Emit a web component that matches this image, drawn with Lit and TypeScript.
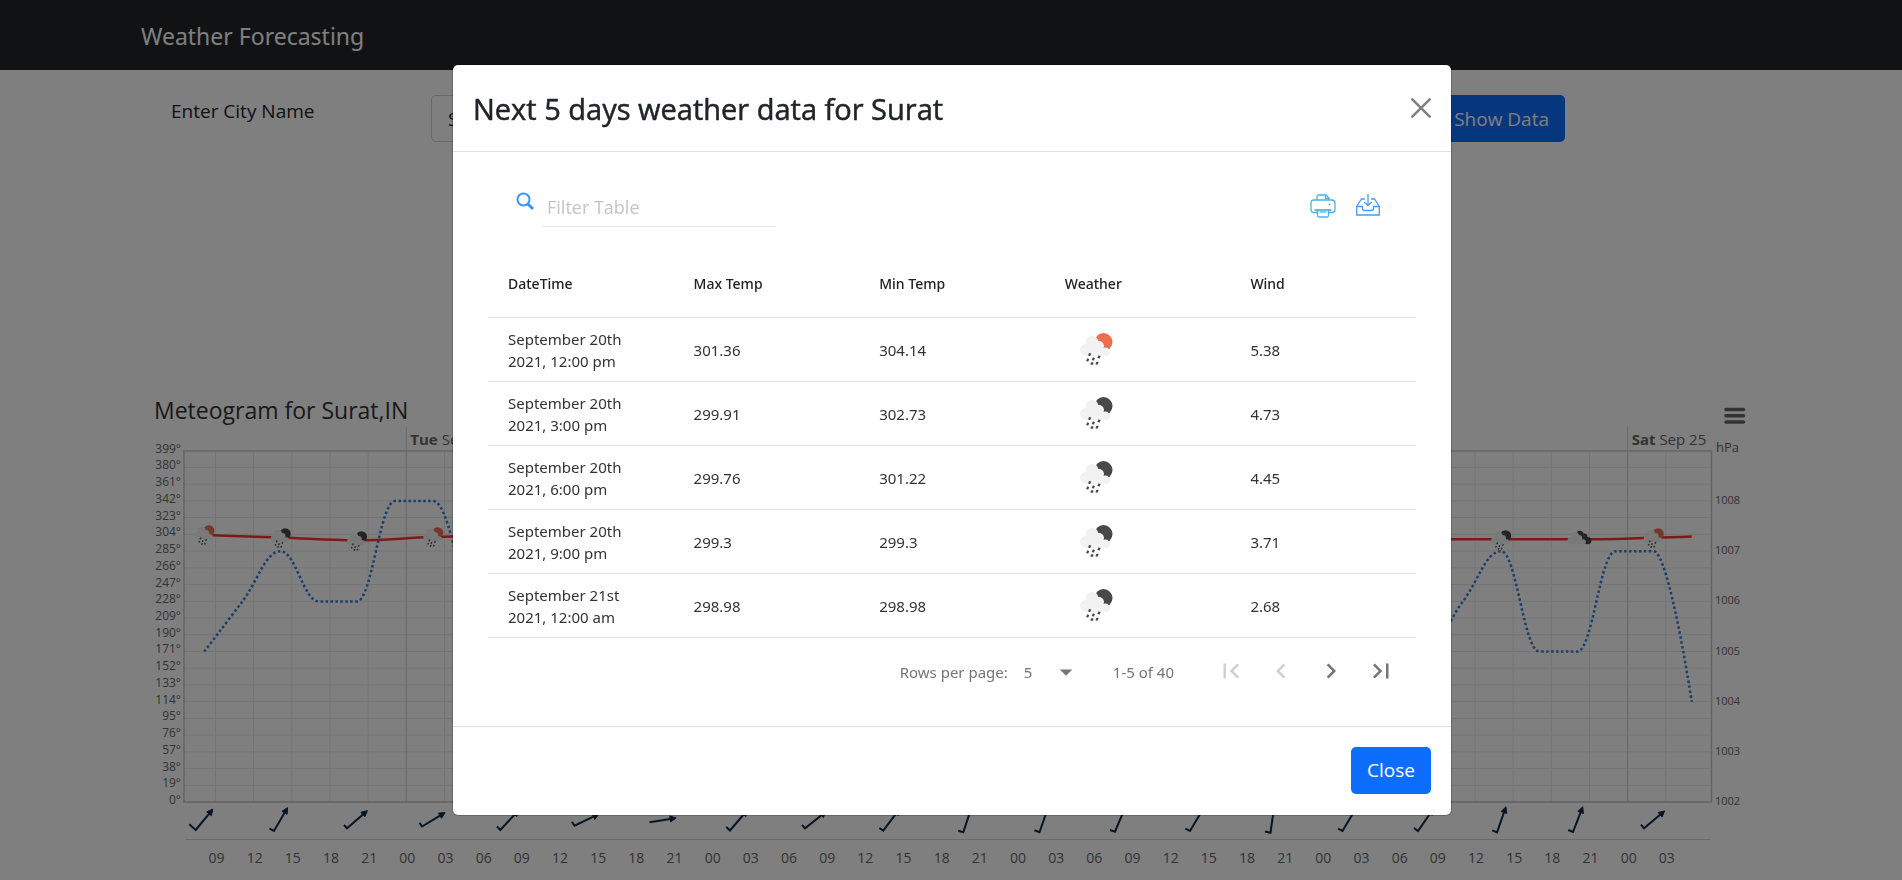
import { LitElement, html, svg, css } from "lit";
import { customElement, property } from "lit/decorators.js";

type Kind = "day-rain" | "night-rain" | "night-cloud";
type Point = [number, number];

/** Artwork for one weather symbol, drawn in a 62 x 62 box. */
const weatherArt = (kind: Kind) => {
  const disc = kind === "day-rain" ? "#ec6e4c" : "#48484a";
  const drops = [
    [24.7, 36.5],
    [22.7, 42],
    [28.3, 41],
    [34, 39],
    [27, 45.5],
    [32, 45.2],
  ];
  return svg`
    ${kind === "night-cloud"
      ? svg`<g fill=${disc}>
          <circle cx="35" cy="22" r="6"></circle><circle cx="42" cy="26" r="5.5"></circle>
          <circle cx="48" cy="32" r="6"></circle><circle cx="43" cy="31" r="6"></circle>
        </g>`
      : svg`<circle cx="38.5" cy="24" r="9" fill=${disc}></circle>`}
    <g fill="#f2f2f2">
      <circle cx="27" cy="24" r="6.3"></circle>
      <circle cx="21" cy="32" r="6"></circle>
      <circle cx="34" cy="28" r="5"></circle>
      <circle cx="40.5" cy="34" r="4.4"></circle>
      <rect x="19" y="25" width="18" height="13" rx="3"></rect>
      <rect x="21" y="30" width="20" height="8" rx="3"></rect>
    </g>
    ${kind === "night-cloud"
      ? ""
      : drops.map(
          ([x, y]) => svg`<line x1=${x + 0.6} y1=${y - 1.3} x2=${x - 0.6} y2=${y + 1.3}
            stroke="#48484a" stroke-width="2.2"></line>`
        )}
  `;
};

@customElement("weather-icon")
class WeatherIcon extends LitElement {
  @property() kind: Kind = "day-rain";
  static styles = css`
    :host { display: block; }
    svg { display: block; width: 62px; height: 62px; }
  `;
  render() {
    return html`<svg viewBox="0 0 62 62" aria-hidden="true">${weatherArt(this.kind)}</svg>`;
  }
}

const STEP = 38.14;
const pointX = (i: number) => 204.3 + i * STEP;
const pressureY = (p: number) => 802 - 50.15 * (p - 1002);

const PRESSURE = [
  1005, 1006, 1007, 1006, 1006, 1008, 1008, 1006, 1005, 1006, 1007, 1005, 1005, 1007,
  1007, 1005, 1005, 1006, 1007, 1005, 1005, 1007, 1007, 1005, 1005, 1006, 1007, 1005,
  1005, 1007, 1007, 1005, 1005, 1006, 1007, 1005, 1005, 1007, 1007, 1004,
];

const TEMPERATURE: Point[] = [
  [0, 535], [2, 537.5], [4, 540.3], [6, 537], [8, 535.8], [12, 539], [16, 539],
  [20, 536], [26, 539], [32, 539.3], [36, 539.3], [38, 537.8], [39, 536.5],
];

const SYMBOLS: [number, Kind, number][] = [
  [0, "day-rain", 535],
  [2, "night-rain", 538],
  [4, "night-rain", 541],
  [6, "day-rain", 537],
  [34, "night-rain", 540],
  [36, "night-cloud", 540],
  [38, "day-rain", 538],
];

/** Wind barbs: tail, a point the shaft passes through, end of the feather. */
const WIND: [Point, Point, Point?][] = [
  [[195.7, 830], [212.7, 809.3], [189.3, 824.3]],
  [[274, 831], [287, 808.6], [269.5, 828.7]],
  [[347, 828.3], [367, 811], [344, 825]],
  [[422, 826.5], [444.5, 813], [419.5, 822.7]],
  [[500.3, 830], [516, 813], [497, 826.3]],
  [[574.5, 825.7], [597, 815], [572, 821.7]],
  [[649.5, 822.3], [676, 818]],
  [[730, 830.5], [744, 814], [726.3, 827]],
  [[805, 828.3], [823, 814], [802, 825]],
  [[883.3, 830.7], [895, 815], [879.3, 828]],
  [[963.3, 832.3], [969, 815], [958.3, 830.7]],
  [[1039.5, 832.3], [1045.5, 815], [1034.5, 830.3]],
  [[1115, 831.7], [1122, 815], [1110, 830]],
  [[1190, 831], [1199.5, 815], [1185.3, 828.7]],
  [[1270.5, 832.7], [1273, 815], [1265, 831.5]],
  [[1342.5, 831], [1352, 815], [1338, 828.7]],
  [[1418, 831], [1429, 815], [1414, 828]],
  [[1497, 832.3], [1505.7, 807.5], [1492.3, 830.3]],
  [[1573, 832], [1582.5, 807.5], [1568.3, 830]],
  [[1644, 828.3], [1664, 811.5], [1641, 824.7]],
];

/** Smooth path through the points whose control points never overshoot them. */
function spline(pts: Point[]): string {
  let d = `M${pts[0][0]} ${pts[0][1]}`;
  let prevRight: Point = pts[0];
  for (let i = 1; i < pts.length; i++) {
    const [x, y] = pts[i];
    const last = pts[i - 1];
    const next = pts[i + 1];
    let left: Point = [x, y];
    let right: Point = [x, y];
    if (next) {
      left = [(1.5 * x + last[0]) / 2.5, (1.5 * y + last[1]) / 2.5];
      right = [(1.5 * x + next[0]) / 2.5, (1.5 * y + next[1]) / 2.5];
      const shift = ((right[1] - left[1]) * (right[0] - x)) / (right[0] - left[0]) + y - right[1];
      left[1] += shift;
      right[1] += shift;
      const hi = Math.max(last[1], y);
      const lo = Math.min(last[1], y);
      if (left[1] > hi) { left[1] = hi; right[1] = 2 * y - hi; }
      else if (left[1] < lo) { left[1] = lo; right[1] = 2 * y - lo; }
      const hi2 = Math.max(next[1], y);
      const lo2 = Math.min(next[1], y);
      if (right[1] > hi2) { right[1] = hi2; left[1] = 2 * y - hi2; }
      else if (right[1] < lo2) { right[1] = lo2; left[1] = 2 * y - lo2; }
    }
    d += `C${prevRight[0]} ${prevRight[1]} ${left[0]} ${left[1]} ${x} ${y}`;
    prevRight = right;
  }
  return d;
}

@customElement("meteogram-chart")
class MeteogramChart extends LitElement {
  static styles = css`
    :host { display: block; }
    .chart { display: block; width: 100%; height: auto; font-family: "Open Sans", "Noto Sans", sans-serif; }
    .title { font-size: 23px; fill: #333; }
    .tick { font-size: 12px; fill: #666; }
    .press { font-size: 11px; fill: #666; }
    .hour { font-size: 14px; fill: #666; }
    .day { font-size: 15px; fill: #666; }
    .unit { font-size: 13px; fill: #666; }
    .end { text-anchor: end; }
    .mid { text-anchor: middle; }
    .bold { font-weight: 700; }
  `;

  private barb([tail, through, feather]: [Point, Point, Point?]) {
    const dx = through[0] - tail[0];
    const dy = through[1] - tail[1];
    const len = Math.hypot(dx, dy);
    const ux = dx / len;
    const uy = dy / len;
    const hx = tail[0] + ux * 27;
    const hy = tail[1] + uy * 27;
    const bx = hx - ux * 6;
    const by = hy - uy * 6;
    return svg`
      <path d="M${bx} ${by}L${tail[0]} ${tail[1]}${feather ? `L${feather[0]} ${feather[1]}` : ""}"
        fill="none" stroke="#0f2a47" stroke-width="2"></path>
      <path d="M${hx} ${hy}L${bx - uy * 3} ${by + ux * 3}L${bx + uy * 3} ${by - ux * 3}Z"
        fill="#0f2a47" stroke="#0f2a47"></path>`;
  }

  render() {
    const hours = Array.from({ length: 39 }, (_, i) => i);
    const hourX = (i: number) => 215.5 + i * 38.166;
    const gridY = (i: number) => 802 - i * 16.73;
    const days = [["Tue", "Sep 21"], ["Wed", "Sep 22"], ["Thu", "Sep 23"], ["Fri", "Sep 24"], ["Sat", "Sep 25"]];
    return html`
      <svg class="chart" viewBox="141 380 1620 500" role="img" aria-label="Meteogram for Surat,IN">
        <text class="title" x="154" y="419">Meteogram for Surat,IN</text>
        <g stroke="#e8e8e8">
          ${Array.from({ length: 20 }, (_, i) => svg`<line x1="184" x2="1711" y1=${gridY(i + 1)} y2=${gridY(i + 1)}></line>`)}
          ${hours.map((i) => svg`<line x1=${hourX(i)} x2=${hourX(i)} y1="451" y2="802"></line>`)}
        </g>
        ${days.map(([name, date], i) => {
          const x = hourX(5 + i * 8);
          return svg`
            <line x1=${x} x2=${x} y1="451" y2="802" stroke="#d2d2d2"></line>
            <line x1=${x} x2=${x} y1="427" y2="451" stroke="#ccd6eb"></line>
            <text class="day" x=${x + 4} y="445"><tspan class="bold">${name}</tspan> ${date}</text>`;
        })}
        <path d="M184 450V802M1711.5 450V802" stroke="#c6c6c6" stroke-width="1.5"></path>
        <path d="M184 451H1712" stroke="#d0dae6" stroke-width="2"></path>
        <path d="M183 802H1712" stroke="#c0c0c0" stroke-width="1.5"></path>
        <path d="M185 839.5H1711" stroke="#ccd6eb"></path>
        ${Array.from({ length: 22 }, (_, i) => svg`<text class="tick end" x="181" y=${gridY(i) + 2}>${i * 19}°</text>`)}
        ${Array.from({ length: 7 }, (_, i) => svg`<text class="press" x="1715" y=${pressureY(1002 + i) + 3}>${1002 + i}</text>`)}
        <text class="unit" x="1716" y="452">hPa</text>
        ${hours.map((i) => svg`<text class="hour mid" x=${hourX(i) + 1} y="863">${String((9 + i * 3) % 24).padStart(2, "0")}</text>`)}
        <path d=${spline(PRESSURE.map((p, i) => [pointX(i), pressureY(p)] as Point))}
          fill="none" stroke="#2f7ed8" stroke-width="2.5" stroke-dasharray="2.5 2.5"></path>
        <path d=${spline(TEMPERATURE.map(([i, y]) => [pointX(i), y] as Point))}
          fill="none" stroke="#ff3333" stroke-width="2.5"></path>
        ${SYMBOLS.map(([i, kind, y]) => svg`
          <svg x=${pointX(i) - 19} y=${y - 19} width="38" height="38" viewBox="0 0 62 62">${weatherArt(kind)}</svg>`)}
        ${WIND.map((w) => this.barb(w))}
        <path d="M1726 409.5H1743.5M1726 415.8H1743.5M1726 422H1743.5" stroke="#666" stroke-width="3.6" stroke-linecap="round"></path>
      </svg>
    `;
  }
}

interface Row {
  date: string;
  max: string;
  min: string;
  kind: Kind;
  wind: string;
}

const ROWS: Row[] = [
  { date: "September 20th 2021, 12:00 pm", max: "301.36", min: "304.14", kind: "day-rain", wind: "5.38" },
  { date: "September 20th 2021, 3:00 pm", max: "299.91", min: "302.73", kind: "night-rain", wind: "4.73" },
  { date: "September 20th 2021, 6:00 pm", max: "299.76", min: "301.22", kind: "night-rain", wind: "4.45" },
  { date: "September 20th 2021, 9:00 pm", max: "299.3", min: "299.3", kind: "night-rain", wind: "3.71" },
  { date: "September 21st 2021, 12:00 am", max: "298.98", min: "298.98", kind: "night-rain", wind: "2.68" },
];

@customElement("forecast-dialog")
class ForecastDialog extends LitElement {
  static styles = css`
    :host { display: block; width: 1000px; max-width: calc(100% - 32px); }
    * { box-sizing: border-box; }
    button, input, select { font: inherit; }
    .dialog { background: #fff; background-clip: padding-box; border: 1px solid rgba(0, 0, 0, 0.2); border-radius: 6px; color: #212529; }
    .head { display: flex; align-items: center; justify-content: space-between; padding: 21px 20px 19px; border-bottom: 1px solid #dee2e6; }
    h4 { margin: 0; font-size: 29px; line-height: 46px; font-weight: 500; -webkit-text-stroke: 0.5px currentColor; }
    .x { display: block; padding: 0; border: 0; background: none; line-height: 0; margin-bottom: 2px; }
    .body { padding: 20px 35px; }
    .tools { display: flex; align-items: flex-start; justify-content: space-between; padding: 13px 35px 0 28px; height: 75px; }
    .filter { display: flex; align-items: flex-start; gap: 8px; }
    .filter svg { margin-top: 7px; }
    .filter input { width: 234px; height: 42px; border: 0; border-bottom: 1px solid #eee; padding: 2px 5px 0; background: none; font-size: 18px; outline: 0; }
    .filter input::placeholder { color: #c4c4c4; opacity: 1; }
    .acts { display: flex; gap: 19px; padding-top: 9px; }
    .acts button { display: block; padding: 0; border: 0; background: none; line-height: 0; }
    table { width: 100%; table-layout: fixed; border-collapse: collapse; font-family: "Noto Sans", "Open Sans", sans-serif; }
    th { height: 70px; padding: 4px 20px 0; text-align: left; font-size: 14px; font-weight: 500; color: #212121; border-bottom: 1px solid #dedede; }
    td { height: 64px; padding: 1px 20px 0; font-size: 15px; line-height: 22px; color: #333; border-bottom: 1px solid #dedede; }
    .pic { padding-top: 0; }
    .pager { display: flex; align-items: center; justify-content: flex-end; height: 68px; padding-right: 10px; font-family: "Noto Sans", "Open Sans", sans-serif; font-size: 15px; color: #757575; }
    .size { position: relative; display: block; margin: 0 32px 0 8px; }
    .size select { display: block; appearance: none; width: 65px; height: 30px; padding: 0 8px; border: 0; background: none; color: #757575; }
    .size svg { position: absolute; right: 0; top: 0; pointer-events: none; }
    .range { margin-right: 32px; }
    .nav { display: block; width: 50px; height: 50px; padding: 9px 10px 11px; border: 0; background: none; line-height: 0; fill: #757575; }
    .nav:disabled { fill: #cfcfcf; }
    .foot { display: flex; justify-content: flex-end; padding: 20px 20px 21px; border-top: 1px solid #dee2e6; }
    .close { height: 47px; padding: 0 16px; border: 0; border-radius: 5px; background: #0d6efd; color: #fff; font-size: 19px; }
  `;

  private nav(label: string, d: string, disabled = false) {
    return html`<button class="nav" aria-label=${label} ?disabled=${disabled}>
      <svg width="30" height="30" viewBox="0 0 24 24" aria-hidden="true"><path d=${d}></path></svg>
    </button>`;
  }

  render() {
    return html`
      <section class="dialog" role="dialog" aria-modal="true" aria-labelledby="title">
        <header class="head">
          <h4 id="title">Next 5 days weather data for Surat</h4>
          <button class="x" aria-label="Dismiss">
            <svg width="20" height="20" viewBox="0 0 20 20" fill="none" stroke="#7f7f7f" stroke-width="2.5" stroke-linecap="round">
              <path d="M1.3 1.3 18.7 18.7M18.7 1.3 1.3 18.7"></path>
            </svg>
          </button>
        </header>
        <div class="body">
          <div class="tools">
            <div class="filter">
              <svg width="18" height="18" viewBox="0 0 18 18" fill="none" stroke="#3a92ff" aria-hidden="true">
                <circle cx="7.500" cy="7.500" r="6" stroke-width="2"></circle>
                <path d="M11.700 11.700 17 17" stroke-width="2.800"></path>
              </svg>
              <input type="text" aria-label="Filter Table" placeholder="Filter Table" />
            </div>
            <div class="acts">
              <button aria-label="Print">
                <svg width="26" height="24" viewBox="0 0 26 24" fill="none" stroke="#4fb0e8" stroke-width="1.3">
                  <path d="M7 6V2.5Q7 1 8.500 1H16L19 4V6"></path>
                  <path d="M15.500 1.200V4.500H19"></path>
                  <path d="M7 18.500H4Q1 18.500 1 15.500V9Q1 6 4 6H22Q25 6 25 9V15.500Q25 18.500 22 18.500H19"></path>
                  <path d="M4.500 16H21.500" stroke="#1590dc"></path>
                  <path d="M7.500 16V21.500Q7.500 23 9 23H17Q18.500 23 18.500 21.500V16"></path>
                  <path d="M9.500 18H16.500"></path>
                  <circle cx="19.500" cy="10.500" r="0.900" fill="#4fb0e8" stroke="none"></circle>
                </svg>
              </button>
              <button aria-label="Download CSV">
                <svg width="26" height="24" viewBox="0 0 26 24" fill="none" stroke="#4a9bff" stroke-width="1.3">
                  <path d="M10 5H6.500L1.700 12.500V21H24.300V12.500L19.500 5H16"></path>
                  <path d="M1.700 12.500H7.500V14.500Q7.500 16.500 9.500 16.500H16.500Q18.500 16.500 18.500 14.500V12.500H24.300"></path>
                  <path d="M13 0V11.500M9.300 8 13 11.700 16.700 8"></path>
                </svg>
              </button>
            </div>
          </div>
          <table>
            <thead>
              <tr>
                <th scope="col">DateTime</th>
                <th scope="col">Max Temp</th>
                <th scope="col">Min Temp</th>
                <th scope="col">Weather</th>
                <th scope="col">Wind</th>
              </tr>
            </thead>
            <tbody>
              ${ROWS.map((r) => html`
                <tr>
                  <td>${r.date}</td>
                  <td>${r.max}</td>
                  <td>${r.min}</td>
                  <td class="pic"><weather-icon .kind=${r.kind}></weather-icon></td>
                  <td>${r.wind}</td>
                </tr>`)}
            </tbody>
          </table>
          <div class="pager">
            <label for="size">Rows per page:</label>
            <span class="size">
              <select id="size"><option>5</option><option>10</option><option>15</option></select>
              <svg width="30" height="30" viewBox="0 0 24 24" fill="#757575" aria-hidden="true"><path d="M7 10l5 5 5-5z"></path></svg>
            </span>
            <span class="range">1-5 of 40</span>
            ${this.nav("First Page", "M18.410 16.590L13.820 12l4.590-4.590L17 6l-6 6 6 6zM6 6h2v12H6z", true)}
            ${this.nav("Previous Page", "M15.410 7.410L14 6l-6 6 6 6 1.410-1.410L10.830 12z", true)}
            ${this.nav("Next Page", "M10 6L8.590 7.410 13.170 12l-4.580 4.590L10 18l6-6z")}
            ${this.nav("Last Page", "M5.590 7.410L10.180 12l-4.590 4.590L7 18l6-6-6-6zM16 6h2v12h-2z")}
          </div>
        </div>
        <footer class="foot"><button class="close">Close</button></footer>
      </section>
    `;
  }
}

@customElement("app-root")
class AppRoot extends LitElement {
  static styles = css`
    :host { display: block; font-family: "Open Sans", "Noto Sans", sans-serif; font-size: 19px; line-height: 30px; color: #212529; background: #fff; }
    * { box-sizing: border-box; }
    .bar { background: #212529; }
    .wrap { max-width: 1650px; margin: 0 auto; padding: 0 15px; }
    .brand { display: inline-block; padding: 17px 0 15px; font-family: "Noto Sans", "Open Sans", sans-serif; font-size: 23px; line-height: 38px; color: #fff; text-decoration: none; }
    .search { display: flex; align-items: flex-start; gap: 40px; padding: 25px 196px 0 30px; margin-bottom: 238px; }
    .search label { flex: 0 0 220px; padding-top: 1px; }
    .search input { flex: 1; min-width: 0; height: 47px; padding: 0 16px; border: 1px solid #ced4da; border-radius: 5px; font: inherit; color: #212529; background: #fff; }
    .search button { height: 47px; padding: 0 16px; border: 0; border-radius: 5px; background: #0d6efd; color: #fff; font: inherit; }
    .shade { position: fixed; inset: 0; display: flex; justify-content: center; align-items: flex-start; padding: 64px 0 0 2px; background: rgba(0, 0, 0, 0.5); overflow: auto; }
  `;

  render() {
    return html`
      <nav class="bar"><div class="wrap"><a class="brand" href="#">Weather Forecasting</a></div></nav>
      <main class="wrap">
        <form class="search">
          <label for="city">Enter City Name</label>
          <input id="city" type="text" value="Surat" />
          <button type="button">Show Data</button>
        </form>
        <meteogram-chart></meteogram-chart>
      </main>
      <div class="shade"><forecast-dialog></forecast-dialog></div>
    `;
  }
}
